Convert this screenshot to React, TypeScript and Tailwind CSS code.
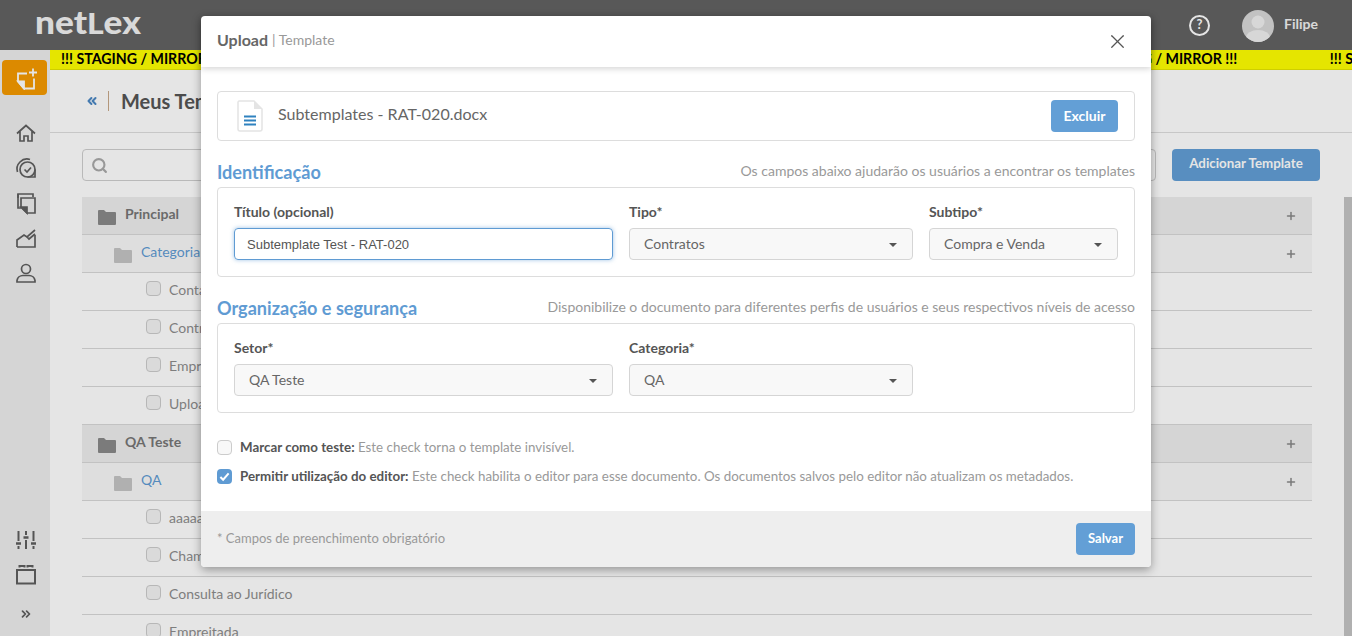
import React from "react";
import { ChevronsLeft, ChevronsRight, Plus, X, Search } from "lucide-react";

const lato = { fontFamily: "Lato, sans-serif" };

function FolderIcon({ className }: { className: string }) {
  return (
    <svg viewBox="0 0 18 15" className={className} fill="currentColor">
      <path d="M0 1a1 1 0 0 1 1-1h5l2 2h9a1 1 0 0 1 1 1v11a1 1 0 0 1-1 1H1a1 1 0 0 1-1-1z" />
    </svg>
  );
}

function SideIcon({ children }: { children: React.ReactNode }) {
  return (
    <svg viewBox="0 0 24 24" className="w-6 h-6 text-[#5f5f5f]" fill="none" stroke="currentColor" strokeWidth="1.7">
      {children}
    </svg>
  );
}

function Sidebar() {
  return (
    <aside className="w-[50px] shrink-0 bg-[#eeeeee] flex flex-col items-center pt-[10px] pb-[15px]">
      <div className="w-[45px] h-[35px] rounded-sm bg-[#f59a00] flex items-center justify-center ml-[-1px]">
        <svg viewBox="0 0 24 24" className="w-6 h-6" fill="none" stroke="#fff" strokeWidth="1.800">
          <path d="M14 7.500H5v8l6 7h10v-10" />
          <path d="M5 15.500h6v7z" fill="#fff" />
          <path d="M20 2.500v8M16 6.500h8" />
        </svg>
      </div>
      <div className="flex flex-col gap-[11px] mt-[26px] ml-[1px]">
        <SideIcon>
          <path d="M3 12.500l9-8 9 8M6 10.500V20h4v-5h4v5h4v-9.500" />
        </SideIcon>
        <SideIcon>
          <circle cx="13.500" cy="13.500" r="7.500" />
          <path d="M21 13.500V21h-7.500" />
          <path d="M10.500 13.500l2.500 2.500 4-4.500" />
          <path d="M3.500 16A10 10 0 0 1 16 3.500" />
        </SideIcon>
        <SideIcon>
          <path d="M4 7V3h15v3" />
          <path d="M4 3v14h3" />
          <path d="M7 7h14v15H13l-6-6z" />
          <path d="M7 16h6v6z" fill="currentColor" />
        </SideIcon>
        <SideIcon>
          <path d="M3 21v-7l7-5 3 2 8-7" />
          <path d="M21 9v12H3" />
          <path d="M13 11l2 2 6-5" />
        </SideIcon>
        <SideIcon>
          <circle cx="12" cy="8" r="4.500" />
          <path d="M3 21v-1.500a6 6 0 0 1 6-5h6a6 6 0 0 1 6 5V21z" />
        </SideIcon>
      </div>
      <div className="mt-auto flex flex-col items-center gap-[10px] ml-[1px]">
        <svg viewBox="0 0 24 24" className="w-6 h-6 text-[#5f5f5f]" fill="none" stroke="currentColor" strokeWidth="2">
          <path d="M4.500 3v10M4.500 18v3M12 3v4M12 12v9M19.500 3v10M19.500 18v3" />
          <path d="M2 15.500h5M9.500 9.500h5M17 15.500h5" strokeWidth="2.500" />
        </svg>
        <svg viewBox="0 0 24 24" className="w-6 h-6 text-[#5f5f5f]" fill="none" stroke="currentColor" strokeWidth="2">
          <path d="M3 8h18v13.500H3z" />
          <path d="M5.500 5.500V4h5v1.500M13.500 5.500V4h5v1.500" />
        </svg>
        <ChevronsRight className="w-[14px] h-[14px] mt-[11px] text-[#5f5f5f]" strokeWidth={3} />
      </div>
    </aside>
  );
}

function Banner() {
  return (
    <div className="h-5 bg-[#ffff00] border-b border-[#e6e600] flex overflow-hidden pl-[11px] text-[14.2px] font-bold leading-[18px] text-black">
      {[0, 1, 2, 3, 4, 5].map((i) => (
        <span key={i} className="w-[253.75px] shrink-0 whitespace-nowrap">
          !!! STAGING / MIRROR !!!
        </span>
      ))}
    </div>
  );
}

function FolderRow({ name, sub }: { name: string; sub?: boolean }) {
  return (
    <div
      className={
        sub
          ? "h-[38px] bg-[#f8f8f8] border-b border-[#d9d9d9] flex items-center pl-8 pr-4 text-[#5f9bd3] text-sm"
          : "h-[38px] bg-[#eeeeee] border-b border-[#d9d9d9] flex items-center pl-4 pr-4 text-[#777777] text-sm font-bold"
      }
    >
      <FolderIcon className={sub ? "w-[18px] h-[15px] text-[#c4c4c4] mt-[3px]" : "w-[18px] h-[15px] text-[#8a8a8a] mt-[3px]"} />
      <span className="ml-[9px] mb-[4px]">{name}</span>
      <Plus className="ml-auto mr-[-1px] w-3 h-3 text-[#888888]" strokeWidth={3} />
    </div>
  );
}

function ItemRow({ name }: { name: string }) {
  return (
    <div className="h-[38px] border-b border-[#d9d9d9] flex items-center pl-16 text-sm text-[#8d8d8d]">
      <span className="w-[15px] h-[15px] rounded-sm border border-[#cccccc] bg-[#f3f3f3] mb-[6px]" />
      <span className="ml-2 mb-[4px]">{name}</span>
    </div>
  );
}

function Background() {
  return (
    <main className="flex-1 min-w-0 relative">
      <Banner />
      <div className="h-[63px] border-b border-[#dedede] flex items-center pl-[35px]">
        <ChevronsLeft className="w-[14px] h-[14px] text-[#4c88c4]" strokeWidth={3.500} />
        <span className="ml-[9px] h-5 w-px bg-[#c8a98a]" />
        <h1 className="ml-[12px] text-xl font-bold text-[#555555]">Meus Templates</h1>
      </div>
      <div className="pl-8 pt-4 flex">
        <div className="w-[1074px] h-8 border border-[#cfcfcf] flex items-center pl-2 rounded-sm">
          <Search className="w-[17px] h-[17px] text-[#aaaaaa]" strokeWidth={3} />
        </div>
        <button className="ml-4 w-[148px] h-8 rounded-sm bg-[#639fd6] text-white text-[13.330px] font-bold pb-[2px]">
          Adicionar Template
        </button>
      </div>
      <div className="ml-8 mt-4 w-[1230px]">
        <FolderRow name="Principal" />
        <FolderRow name="Categoria" sub />
        <ItemRow name="Contabilidade" />
        <ItemRow name="Contratos" />
        <ItemRow name="Empresarial" />
        <ItemRow name="Upload" />
        <FolderRow name="QA Teste" />
        <FolderRow name="QA" sub />
        <ItemRow name="aaaaa" />
        <ItemRow name="Chamado" />
        <ItemRow name="Consulta ao Jurídico" />
        <ItemRow name="Empreitada" />
      </div>
      <div className="absolute right-0 top-[147px] bottom-0 w-2 bg-[#c4c4c4]" />
    </main>
  );
}

function Field({ label, value, className }: { label: string; value: string; className: string }) {
  return (
    <div className={className}>
      <label className="block text-sm font-bold text-[#555555] leading-[15px] mb-[9px]">{label}</label>
      <div className="h-8 rounded-sm border border-[#d5d5d5] bg-[#f8f8f8] flex items-center pl-[14px] pr-[15px] text-sm text-[#666666]">
        <span>{value}</span>
        <span className="ml-auto w-0 h-0 border-x-[4px] border-x-transparent border-t-[4px] border-t-[#555555] mt-[2px]" />
      </div>
    </div>
  );
}

function Modal() {
  return (
    <div className="absolute left-[201px] top-4 w-[950px] bg-white rounded-sm shadow-[0_3px_10px_rgba(0,0,0,0.35)] text-[#666666]">
      <div className="h-[51px] flex items-center pl-4 pr-[22px] shadow-[0_2px_6px_rgba(0,0,0,0.16)] relative">
        <span className="text-base font-bold text-[#666666] mb-1">Upload</span>
        <span className="ml-1 text-sm text-[#999999] mb-1">| Template</span>
        <X className="ml-auto w-[23px] h-[23px] text-[#555555]" strokeWidth={1.300} />
      </div>
      <div className="px-4 pt-6">
        <div className="h-[50px] rounded-sm border border-[#dddddd] flex items-center pl-[19px] pr-4">
          <svg viewBox="0 0 26 32" className="w-[26px] h-8">
            <path d="M2 1h15l8 8v20a2 2 0 0 1-2 2H3a2 2 0 0 1-2-2V2z" fill="#fff" stroke="#e4e4e4" strokeWidth="1.500" />
            <path d="M17 1v8h8z" fill="#e4e4e4" />
            <path d="M7 16.500h12M7 20.500h12M7 24.500h12" stroke="#2f82bf" strokeWidth="2" />
          </svg>
          <span className="ml-[15px] text-[16.050px] text-[#666666] mb-1">Subtemplates - RAT-020.docx</span>
          <button className="ml-auto w-[67px] h-8 rounded-sm bg-[#639fd6] text-white text-sm font-bold">Excluir</button>
        </div>

        <div className="mt-[16px] flex items-end justify-between h-[30px]">
          <h2 className="text-[18.100px] font-bold text-[#5f9bd3] leading-[24px] mb-[3px]">Identificação</h2>
          <p className="text-sm text-[#999999] leading-[24px] mb-[4px]">Os campos abaixo ajudarão os usuários a encontrar os templates</p>
        </div>
        <div className="h-[90px] rounded-sm border border-[#dddddd] px-4 pt-4 flex gap-4">
          <div className="w-[379px]">
            <label className="block text-sm font-bold text-[#555555] leading-[15px] mb-[9px]">Título (opcional)</label>
            <div className="h-8 rounded-sm border border-[#5f9bd3] shadow-[0_0_4px_rgba(95,155,211,0.6)] flex items-center pl-3 pt-[1px] text-[13px] text-[#555555] font-['Liberation_Sans',sans-serif]">
              Subtemplate Test - RAT-020
            </div>
          </div>
          <Field label="Tipo*" value="Contratos" className="w-[284px]" />
          <Field label="Subtipo*" value="Compra e Venda" className="w-[189px]" />
        </div>

        <div className="mt-[16px] flex items-end justify-between h-[30px]">
          <h2 className="text-[18.100px] font-bold text-[#5f9bd3] leading-[24px] mb-[3px]">Organização e segurança</h2>
          <p className="text-sm text-[#999999] leading-[24px] mb-[4px]">Disponibilize o documento para diferentes perfis de usuários e seus respectivos níveis de acesso</p>
        </div>
        <div className="h-[90px] rounded-sm border border-[#dddddd] px-4 pt-4 flex gap-4">
          <Field label="Setor*" value="QA Teste" className="w-[379px]" />
          <Field label="Categoria*" value="QA" className="w-[284px]" />
        </div>

        <div className="mt-[26px] flex items-center h-4 text-[13.350px]">
          <span className="w-[15px] h-[15px] rounded-sm border border-[#cccccc] bg-[#f8f8f8]" />
          <p className="ml-2 text-[#999999]">
            <b className="text-[#555555]">Marcar como teste:</b> Este check torna o template invisível.
          </p>
        </div>
        <div className="mt-[13px] flex items-center h-4 text-[13.350px]">
          <span className="w-[15px] h-[15px] rounded-sm bg-[#5f9bd3] flex items-center justify-center">
            <svg viewBox="0 0 12 12" className="w-[11px] h-[11px]" fill="none" stroke="#fff" strokeWidth="2.200">
              <path d="M1.500 6.500l3 3 6-7" />
            </svg>
          </span>
          <p className="ml-2 text-[#999999]">
            <b className="text-[#555555]">Permitir utilização do editor:</b> Este check habilita o editor para esse documento. Os documentos salvos pelo editor não atualizam os metadados.
          </p>
        </div>
      </div>
      <div className="mt-[27px] h-14 bg-[#eeeeee] flex items-center justify-between px-4 rounded-b-sm">
        <span className="text-[13px] text-[#999999]">* Campos de preenchimento obrigatório</span>
        <button className="w-[59px] h-8 rounded-sm bg-[#639fd6] text-white text-[13px] font-bold">Salvar</button>
      </div>
    </div>
  );
}

export default function App() {
  return (
    <div className="relative w-[1352px] h-[636px] overflow-hidden bg-white" style={lato}>
      <header className="h-[50px] bg-[#636363] flex items-center pl-[35px] pr-[34px]">
        <span className="text-[32px] leading-[50px] font-black text-[#f2f2f2] mb-[6px] scale-x-[1.1] origin-left">
          net<span className="text-[29px]">L</span>ex
        </span>
        <div className="ml-auto flex items-center">
          <span className="w-[21px] h-[21px] rounded-full border-2 border-white flex items-center justify-center text-[13px] font-bold text-white">?</span>
          <svg viewBox="0 0 32 32" className="ml-[32px] w-8 h-8 mt-[1px]">
            <clipPath id="avatar">
              <circle cx="16" cy="16" r="16" />
            </clipPath>
            <g clipPath="url(#avatar)">
              <rect width="32" height="32" fill="#d8d8d8" />
              <circle cx="16" cy="12" r="6.500" fill="#f0f0f0" />
              <ellipse cx="16" cy="28" rx="12" ry="8" fill="#f0f0f0" />
            </g>
          </svg>
          <span className="ml-[10px] text-sm font-bold text-[#f2f2f2] mb-[3px]">Filipe</span>
        </div>
      </header>
      <div className="flex h-[586px]">
        <Sidebar />
        <Background />
      </div>
      <div className="absolute inset-0 bg-black/10" />
      <Modal />
    </div>
  );
}
